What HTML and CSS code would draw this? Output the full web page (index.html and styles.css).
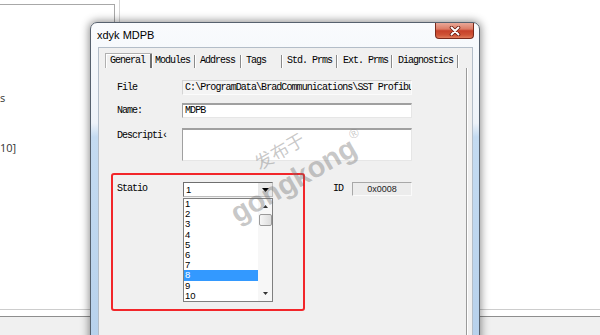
FILE: index.html
```html
<!DOCTYPE html>
<html>
<head>
<meta charset="utf-8">
<title>xdyk MDPB</title>
<link rel="stylesheet" href="styles.css">
</head>
<body>
<div class="desk">
  <div class="bgwin">
    <div class="bglist">
      <div class="bgtext t1">s</div>
      <div class="bgtext t2">10]</div>
    </div>
  </div>
  <div class="bgstatus"><div class="bgstatus-inner"></div></div>

  <div class="dialog">
    <div class="titlebar">
      <span class="title">xdyk MDPB</span>
      <div class="close">
        <svg width="12" height="10" viewBox="0 0 12 10">
          <path d="M2.5 1.5 L9.5 8.5 M9.5 1.5 L2.5 8.5" stroke="#6b1c10" stroke-width="3.6" stroke-linecap="round"/>
          <path d="M2.5 1.5 L9.5 8.5 M9.5 1.5 L2.5 8.5" stroke="#ffffff" stroke-width="1.9" stroke-linecap="round"/>
        </svg>
      </div>
    </div>
    <div class="client">
      <div class="tabs">
        <div class="tab active w-gen">General</div>
        <div class="tab w-mod">Modules</div>
        <div class="tab w-adr">Address</div>
        <div class="tab w-tag">Tags</div>
        <div class="tab w-std">Std. Prms</div>
        <div class="tab w-ext">Ext. Prms</div>
        <div class="tab w-dia">Diagnostics</div>
      </div>
      <div class="page">
        <div class="row r-file">
          <span class="lbl">File</span>
          <div class="field ro">C:\ProgramData\BradCommunications\SST Profibu</div>
        </div>
        <div class="row r-name">
          <span class="lbl">Name:</span>
          <div class="field edit">MDPB</div>
        </div>
        <div class="row r-desc">
          <span class="lbl">Descripti‹</span>
          <div class="field edit tall"></div>
        </div>
        <div class="station-row">
          <div class="redbox">
            <span class="lbl st">Statio</span>
            <div class="combo-wrap">
              <div class="combo">
                <span class="combo-val">1</span>
                <span class="combo-btn"><svg width="7" height="4" viewBox="0 0 7 4"><path d="M0 0 H7 L3.5 4 Z" fill="#000"/></svg></span>
              </div>
              <div class="list">
                <div class="items">
                  <div class="item">1</div>
                  <div class="item">2</div>
                  <div class="item">3</div>
                  <div class="item">4</div>
                  <div class="item">5</div>
                  <div class="item">6</div>
                  <div class="item">7</div>
                  <div class="item sel">8</div>
                  <div class="item">9</div>
                  <div class="item">10</div>
                </div>
                <div class="vscroll">
                  <svg class="arr" width="5" height="3" viewBox="0 0 5 3"><path d="M0 3 H5 L2.5 0 Z" fill="#333"/></svg>
                  <div class="thumb"></div>
                  <div class="track"></div>
                  <svg class="arr" width="5" height="3" viewBox="0 0 5 3"><path d="M0 0 H5 L2.5 3 Z" fill="#333"/></svg>
                </div>
              </div>
            </div>
          </div>
          <div class="idgroup">
            <span class="lbl idl">ID</span>
            <div class="idfield">0x0008</div>
          </div>
        </div>
      </div>
    </div>
  </div>

  <div class="wm wm-cn">发布于</div>
  <div class="wm wm-en">gongkong</div>
  <div class="wm wm-r">®</div>
</div>
</body>
</html>
```

FILE: styles.css
```css
html, body {
  margin: 0;
  padding: 0;
}
body {
  background: #fff;
  font-family: "Liberation Sans", Arial, sans-serif;
}
.desk {
  position: relative;
  width: 600px;
  height: 335px;
  overflow: hidden;
  background: #fff;
}

/* background window */
.bgwin {
  position: absolute;
  left: 0;
  top: 0;
  width: 119px;
  height: 309px;
  border-right: 1px solid #d6d6d6;
}
.bglist {
  box-sizing: border-box;
  width: 115px;
  height: 304px;
  margin-top: 4px;
  border-top: 1px solid #a8a8a8;
  border-right: 1px solid #a8a8a8;
  display: flex;
  flex-direction: column;
}
.bgtext {
  font-family: "Open Sans", "Liberation Sans", sans-serif;
  font-size: 11px;
  line-height: 13px;
  color: #333;
}
.t1 { margin-top: 86px; margin-left: 0; }
.t2 { margin-top: 37px; margin-left: 0; }

.bgstatus {
  position: absolute;
  left: 0;
  right: 0;
  top: 309px;
  height: 26px;
  border-top: 1px solid #cdcdcd;
  background: #fff;
}
.bgstatus-inner {
  margin-top: 6px;
  height: 20px;
  border-top: 1px solid #8e8e8e;
  background: #f0f0f0;
}

/* dialog window */
.dialog {
  position: absolute;
  left: 90px;
  top: 22px;
  width: 390px;
  height: 330px;
  box-sizing: border-box;
  border: 1px solid #56616e;
  border-radius: 7px 7px 0 0;
  background: linear-gradient(180deg, #f9fbfd 0, #eef3f9 100px, #c4dbf1 114px, #b7d1ec 100%);
  box-shadow: 0 0 8px 1px rgba(0,0,0,0.45);
  display: flex;
  flex-direction: column;
}
.titlebar {
  height: 24px;
  display: flex;
  align-items: flex-start;
  flex: none;
}
.title {
  padding-left: 6px;
  padding-top: 6px;
  font-size: 11px;
  line-height: 12px;
  color: #000;
}
.close {
  margin-left: auto;
  margin-right: 5px;
  width: 39px;
  height: 16px;
  box-sizing: border-box;
  border: 1px solid #7a2a1c;
  border-top: none;
  border-radius: 0 0 4px 4px;
  background: linear-gradient(180deg, #e9a898 0, #dc7c66 40%, #c7412a 52%, #cf5436 80%, #e07a5a 100%);
  display: flex;
  align-items: center;
  justify-content: center;
}

.client {
  flex: 1;
  margin: 0 6px 0 7px;
  border: 1px solid #b3bdc8;
  border-bottom: none;
  background: #f0f0f0;
  display: flex;
  flex-direction: column;
}

/* tabs */
.tabs {
  display: flex;
  margin: 5px 0 0 6px;
  height: 15px;
}
.tab {
  box-sizing: border-box;
  height: 15px;
  padding-left: 5px;
  font-family: "Liberation Mono", "DejaVu Sans Mono", monospace;
  font-size: 10px;
  letter-spacing: -1px;
  line-height: 15px;
  color: #000;
  white-space: nowrap;
  position: relative;
}
.tab::after {
  content: "";
  position: absolute;
  right: 0;
  top: 2px;
  bottom: 0;
  width: 1px;
  background: #8a8a8a;
  box-shadow: 1px 0 0 #fff;
}
.tab.active {
  border-top: 1px solid #b0b0b0;
  border-left: 1px solid #b0b0b0;
  box-shadow: inset 1px 1px 0 #fff;
  padding-left: 4px;
  line-height: 14px;
}
.tab.active::after {
  top: 0;
  width: 2px;
  background: #707070;
}
.w-gen { width: 47px; }
.w-mod { width: 43px; padding-left: 3px; }
.w-adr { width: 46px; }
.w-tag { width: 41px; }
.w-std { width: 55px; }
.w-ext { width: 55px; padding-left: 6px; }
.w-dia { width: 66px; padding-left: 6px; }

/* page */
.page {
  flex: 1;
  margin: 0 5px 0 0;
  border-right: 1px solid #9a9a9a;
  box-shadow: 1px 0 0 #fff;
  padding: 12px 0 0 18px;
  display: flex;
  flex-direction: column;
}
.lbl {
  font-family: "Liberation Mono", "DejaVu Sans Mono", monospace;
  font-size: 10px;
  letter-spacing: -1px;
  color: #000;
  white-space: nowrap;
}
.row {
  display: grid;
  grid-template-columns: 65px 230px;
  align-items: start;
}
.row .lbl { line-height: 15px; }
.r-name { margin-top: 8px; }
.r-desc { margin-top: 10px; }
.field {
  box-sizing: border-box;
  height: 15px;
  padding-left: 2px;
  font-family: "Liberation Mono", "DejaVu Sans Mono", monospace;
  font-size: 10px;
  letter-spacing: -0.93px;
  line-height: 14px;
  color: #000;
  white-space: nowrap;
  overflow: hidden;
}
.field.ro {
  background: #f4f4f4;
  border-top: 1px solid #d4d4d4;
  border-left: 1px solid #d4d4d4;
  border-right: 1px solid #fbfbfb;
  border-bottom: 1px solid #fbfbfb;
}
.field.edit {
  background: #fff;
  border-top: 2px solid #a0a0a0;
  border-left: 1px solid #a0a0a0;
  border-right: 1px solid #e6e6e6;
  border-bottom: 1px solid #e6e6e6;
  line-height: 12px;
}
.field.tall { height: 33px; }

/* station */
.station-row {
  display: flex;
  align-items: flex-start;
  margin-top: 12px;
}
.redbox {
  box-sizing: border-box;
  width: 194px;
  height: 138px;
  margin-left: -6px;
  border: 2px solid #f2262a;
  border-radius: 3px;
  padding: 7px 0 0 4px;
  display: flex;
  align-items: flex-start;
}
.lbl.st {
  width: 66px;
  line-height: 13px;
}
.combo-wrap {
  width: 90px;
  display: flex;
  flex-direction: column;
}
.combo {
  box-sizing: border-box;
  height: 15px;
  background: #fff;
  border-top: 1px solid #6f6f6f;
  border-left: 1px solid #6f6f6f;
  border-right: 1px solid #bdbdbd;
  border-bottom: 1px solid #bdbdbd;
  display: flex;
}
.combo-val {
  flex: 1;
  padding-left: 2px;
  font-size: 9.5px;
  line-height: 14px;
  color: #000;
}
.combo-btn {
  width: 14px;
  background: #e9e9e9;
  display: flex;
  align-items: center;
  justify-content: center;
}
.list {
  box-sizing: border-box;
  height: 104px;
  margin-top: 1px;
  background: #fff;
  border: 1px solid #7f7f7f;
  display: flex;
}
.items {
  flex: 1;
}
.item {
  height: 10.2px;
  line-height: 10.2px;
  padding-left: 1px;
  font-size: 9.5px;
  color: #000;
}
.item.sel {
  background: #3399ff;
  color: #fff;
}
.vscroll {
  width: 14px;
  background: #f7f7f7;
  display: flex;
  flex-direction: column;
  align-items: center;
}
.vscroll .arr { margin-top: 6px; flex: none; }
.thumb {
  margin-top: 6px;
  width: 13px;
  height: 12px;
  box-sizing: border-box;
  border: 1px solid #9a9a9a;
  border-radius: 2px;
  background: linear-gradient(90deg, #f6f6f6, #dcdcdc);
}
.track { flex: 1; }
.vscroll .arr:last-child { margin: 0 0 6px 0; }

.idgroup {
  display: flex;
  align-items: center;
  margin: 9px 0 0 28px;
}
.lbl.idl {
  width: 19px;
  line-height: 14px;
}
.idfield {
  box-sizing: border-box;
  width: 60px;
  height: 14px;
  background: #ececec;
  border-top: 1px solid #a8a8a8;
  border-left: 1px solid #a8a8a8;
  border-right: 1px solid #fafafa;
  border-bottom: 1px solid #fafafa;
  font-size: 9px;
  line-height: 12px;
  text-align: center;
  color: #222;
}

/* watermark */
.wm {
  position: absolute;
  color: rgba(110,110,110,0.38);
  white-space: nowrap;
  transform: rotate(-30deg);
  transform-origin: center center;
  pointer-events: none;
}
.wm-cn {
  left: 252px;
  top: 138px;
  font-family: "Noto Sans CJK SC", sans-serif;
  font-size: 18px;
  line-height: 24px;
}
.wm-en {
  left: 223px;
  top: 164px;
  font-family: "Liberation Sans", Arial, sans-serif;
  font-weight: bold;
  font-size: 29px;
  line-height: 32px;
}
.wm-r {
  left: 349px;
  top: 126px;
  font-family: "Liberation Sans", Arial, sans-serif;
  font-size: 13px;
  line-height: 15px;
}
```
